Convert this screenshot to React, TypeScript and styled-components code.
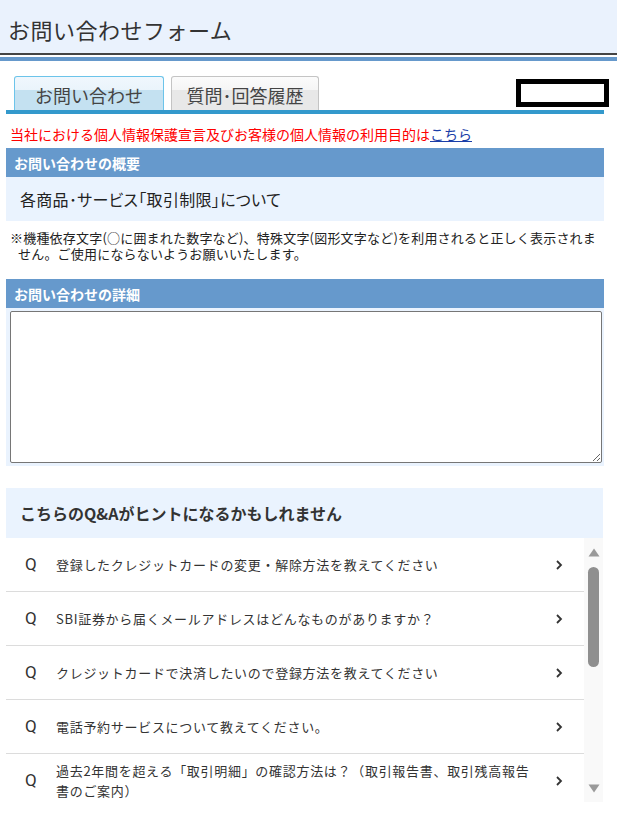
import React from "react";
import styled, { createGlobalStyle } from "styled-components";

const GlobalStyle = createGlobalStyle`
  html, body { margin: 0; padding: 0; background: #ffffff; }
  body {
    font-family: "Noto Sans CJK JP", "Noto Sans", sans-serif;
    color: #222;
  }
  * { box-sizing: border-box; }
`;

const Page = styled.div`
  width: 617px;
  display: flex;
  flex-direction: column;
`;

const Header = styled.header`
  height: 55px;
  background: #eaf2fd;
  display: flex;
  align-items: center;
  padding: 4px 0 0 8px;
  border-bottom: 2px solid #444;
`;

const Title = styled.h1`
  margin: 0;
  font-size: 22px;
  font-weight: 400;
  color: #333;
  letter-spacing: 0.5px;
`;

const HeaderRule = styled.div`
  height: 4px;
  margin-top: 2px;
  background: #6699cc;
`;

const Main = styled.main`
  padding: 0 13px 0 6px;
  display: flex;
  flex-direction: column;
`;

const TabRow = styled.div`
  margin-top: 15px;
  display: flex;
  align-items: flex-end;
  gap: 7px;
  padding-left: 8px;
  border-bottom: 4px solid #3399cc;
  height: 38px;
`;

const Tab = styled.div<{ $active?: boolean }>`
  width: ${(p) => (p.$active ? 150 : 148)}px;
  height: 34px;
  border: 1px solid ${(p) => (p.$active ? "#6cc4ea" : "#c4c4c4")};
  border-bottom: none;
  border-radius: 3px 3px 0 0;
  background: ${(p) =>
    p.$active
      ? "linear-gradient(#f0f7fd 0, #eaf4fb 40%, #c4e1f1 40%, #c4e1f1 100%)"
      : "linear-gradient(#fbfbfb 0, #f5f5f5 40%, #e8e8e8 40%, #e8e8e8 100%)"};
  display: flex;
  align-items: center;
  justify-content: center;
  font-size: 18px;
  color: #444;
  padding-top: 2px;
`;

const BlackBox = styled.div`
  margin-left: auto;
  margin-right: -5px;
  margin-bottom: 3px;
  width: 93px;
  height: 28px;
  border: 5px solid #000;
  background: #fff;
`;

const Notice = styled.p`
  margin: 10px 0 0 4px;
  font-size: 14px;
  line-height: 20px;
  color: #ff0000;
`;

const Link = styled.a`
  color: #1a3ea8;
  text-decoration: underline;
`;

const SectionHead = styled.h2<{ $top?: number }>`
  margin: ${(p) => p.$top ?? 0}px 0 0;
  height: 29px;
  background: #6699cc;
  color: #fff;
  font-size: 14px;
  font-weight: 700;
  display: flex;
  align-items: center;
  padding-left: 8px;
`;

const Summary = styled.div`
  height: 44px;
  background: #eaf3fe;
  display: flex;
  align-items: center;
  padding-left: 14px;
  font-size: 16px;
  color: #222;
  font-feature-settings: "palt";
  letter-spacing: 0.3px;
`;

const Note = styled.p`
  margin: 9px 0 0;
  padding-left: 12px;
  text-indent: -8px;
  font-size: 13px;
  line-height: 16px;
  color: #222;
  letter-spacing: 0.2px;
  white-space: nowrap;
`;

const DetailArea = styled.div`
  background: #eaf3fe;
  padding: 3px 2px 3px 4px;
  display: flex;
`;

const TextArea = styled.textarea`
  width: 100%;
  height: 152px;
  border: 1px solid #767676;
  border-radius: 2px;
  background: #fff;
  resize: vertical;
  font-family: inherit;
  display: block;
`;

const QAPanel = styled.section`
  margin-top: 22px;
  margin-right: 1px;
  display: flex;
  flex-direction: column;
`;

const QAHead = styled.h3`
  margin: 0;
  height: 50px;
  background: #eaf3fe;
  display: flex;
  align-items: center;
  padding-left: 14px;
  font-size: 16px;
  font-weight: 700;
  color: #333;
`;

const QABody = styled.div`
  height: 264px;
  display: flex;
`;

const QAList = styled.ul`
  flex: 1;
  margin: 0;
  padding: 0;
  list-style: none;
  overflow: hidden;
`;

const QARow = styled.li`
  height: 54px;
  display: grid;
  grid-template-columns: 50px 1fr 44px;
  align-items: center;
  border-bottom: 1px solid #dcdcdc;
  color: #333;
`;

const QMark = styled.span`
  padding-left: 19px;
  padding-bottom: 2px;
  font-family: Roboto, "Noto Sans", sans-serif;
  font-size: 17px;
  line-height: 20px;
  color: #333;
`;

const QText = styled.span`
  padding-right: 4px;
  font-size: 13px;
  line-height: 20px;
  letter-spacing: 0.7px;
  color: #333;
`;

const Chevron = styled.svg`
  margin-left: 15px;
  width: 8px;
  height: 12px;
`;

const ScrollBar = styled.div`
  width: 19px;
  background: #f9f9f9;
  display: flex;
  flex-direction: column;
  align-items: center;
  padding: 10px 0 9px;
`;

const ScrollThumb = styled.div`
  margin-top: 10px;
  width: 11px;
  height: 100px;
  border-radius: 6px;
  background: #8f8f8f;
`;

const ScrollSpacer = styled.div`
  flex: 1;
`;

const Arrow = styled.svg`
  width: 12px;
  height: 9px;
`;

const questions = [
  "登録したクレジットカードの変更・解除方法を教えてください",
  "SBI証券から届くメールアドレスはどんなものがありますか？",
  "クレジットカードで決済したいので登録方法を教えてください",
  "電話予約サービスについて教えてください。",
  "過去2年間を超える「取引明細」の確認方法は？（取引報告書、取引残高報告書のご案内）",
];

export default function App() {
  return (
    <Page>
      <GlobalStyle />
      <Header>
        <Title>お問い合わせフォーム</Title>
      </Header>
      <HeaderRule />
      <Main>
        <TabRow>
          <Tab $active>お問い合わせ</Tab>
          <Tab>質問･回答履歴</Tab>
          <BlackBox />
        </TabRow>
        <Notice>
          当社における個人情報保護宣言及びお客様の個人情報の利用目的は
          <Link href="#">こちら</Link>
        </Notice>
        <SectionHead $top={4}>お問い合わせの概要</SectionHead>
        <Summary>各商品･サービス「取引制限」について</Summary>
        <Note>
          ※機種依存文字(○に囲まれた数字など)、特殊文字(図形文字など)を利用されると正しく表示されま
          <br />
          せん。ご使用にならないようお願いいたします。
        </Note>
        <SectionHead $top={17}>お問い合わせの詳細</SectionHead>
        <DetailArea>
          <TextArea />
        </DetailArea>
        <QAPanel>
          <QAHead>こちらのQ&amp;Aがヒントになるかもしれません</QAHead>
          <QABody>
            <QAList>
              {questions.map((q) => (
                <QARow key={q}>
                  <QMark>Q</QMark>
                  <QText>{q}</QText>
                  <Chevron viewBox="0 0 8 12">
                    <polyline
                      points="2,2 6,6 2,10"
                      fill="none"
                      stroke="#333"
                      strokeWidth="1.8"
                    />
                  </Chevron>
                </QARow>
              ))}
            </QAList>
            <ScrollBar>
              <Arrow viewBox="0 0 12 9">
                <polygon points="6,0.5 11.5,8.5 0.5,8.5" fill="#9a9a9a" />
              </Arrow>
              <ScrollThumb />
              <ScrollSpacer />
              <Arrow viewBox="0 0 12 9">
                <polygon points="0.5,0.5 11.5,0.5 6,8.5" fill="#9a9a9a" />
              </Arrow>
            </ScrollBar>
          </QABody>
        </QAPanel>
      </Main>
    </Page>
  );
}
